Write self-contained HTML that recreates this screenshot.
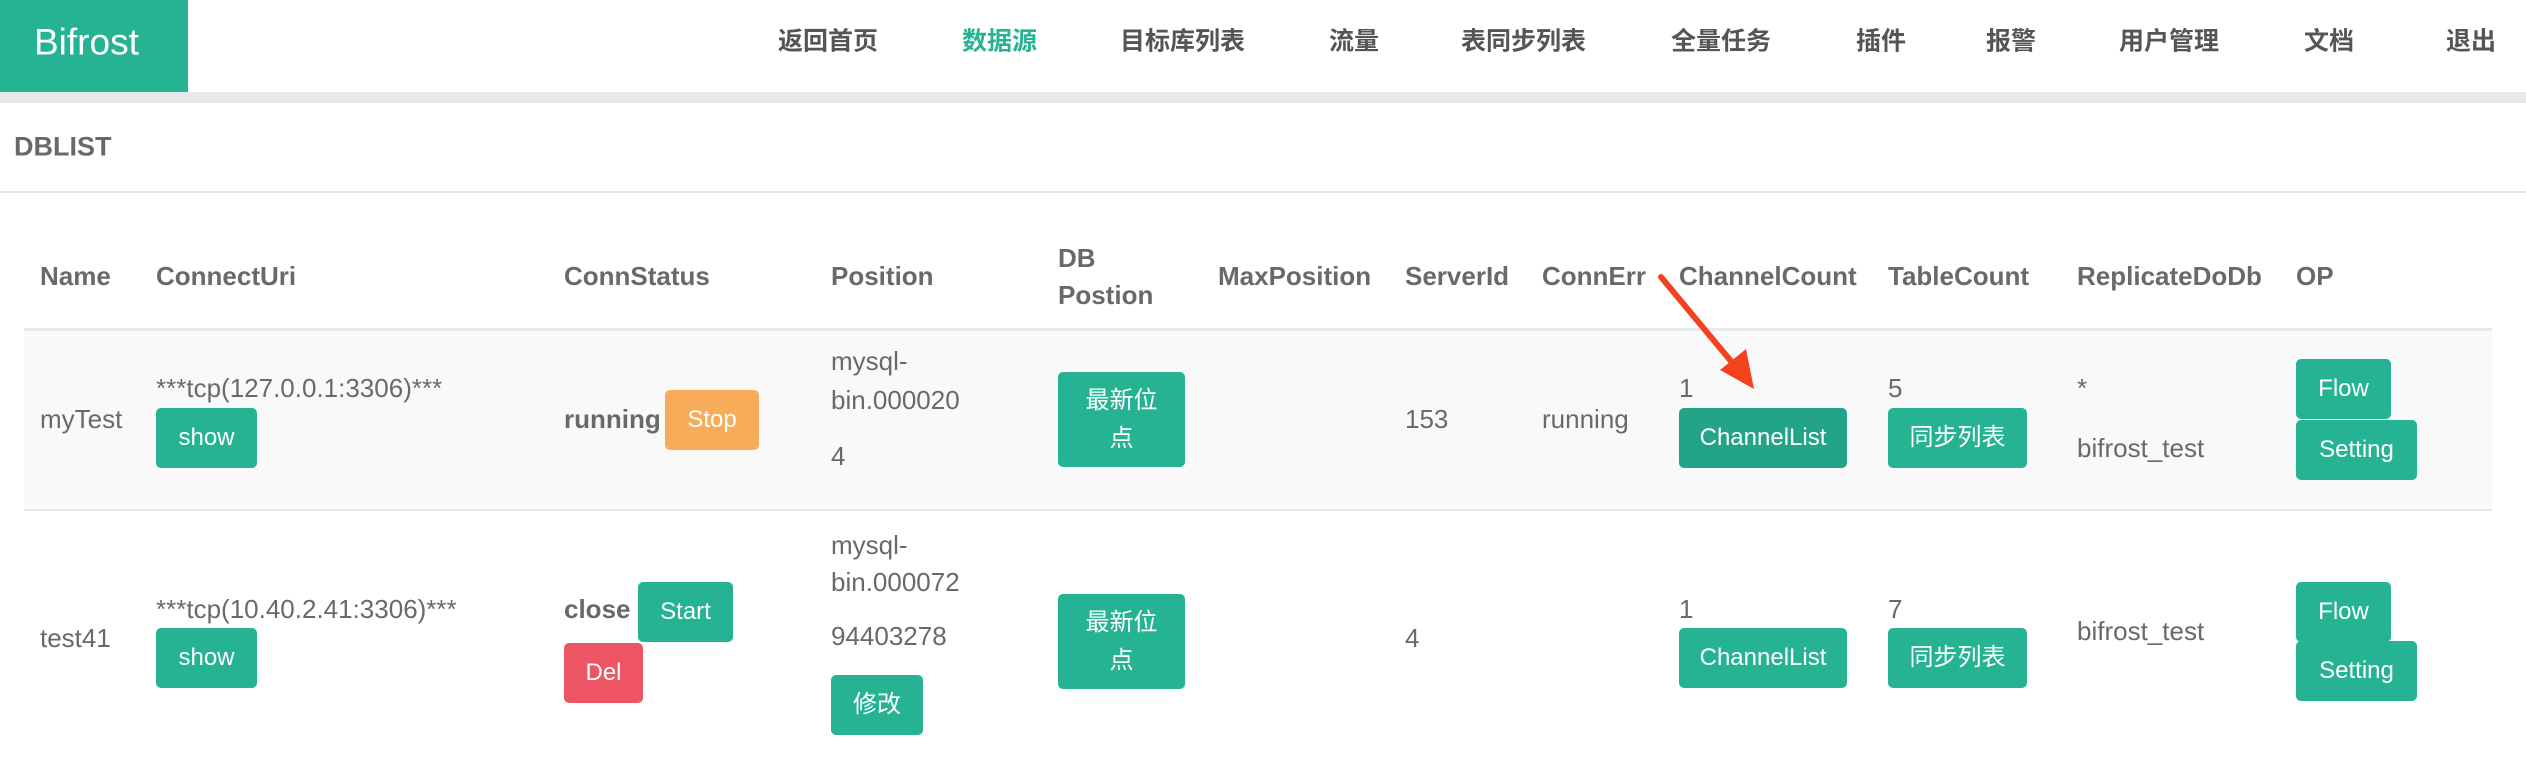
<!DOCTYPE html>
<html><head><meta charset="utf-8"><style>
*{margin:0;padding:0;box-sizing:border-box}
body{width:2526px;height:778px;background:#fff;position:relative;overflow:hidden;font-family:"Liberation Sans","Noto Sans CJK SC",sans-serif;color:#676a6c;font-size:26px}
.t{position:absolute;transform:translateY(-50%);white-space:nowrap;line-height:1}
.h{font-weight:bold;color:#676a6c}
.nav{position:absolute;top:42px;transform:translateY(-50%);font-size:25px;font-weight:bold;color:#555;white-space:nowrap;line-height:1}
.b{position:absolute;background:#26b393;color:#fff;border-radius:5px;display:flex;align-items:center;justify-content:center;text-align:center;font-size:24px;line-height:38px;height:60px}
</style></head><body>
<div style="position:absolute;left:0;top:0;width:188px;height:92px;background:#26b393"></div>
<div class="t" style="left:34px;top:42px;color:#fff;font-size:37px">Bifrost</div>
<div class="nav" style="left:778px">返回首页</div>
<div class="nav" style="left:962px;color:#26b393">数据源</div>
<div class="nav" style="left:1120px">目标库列表</div>
<div class="nav" style="left:1329px">流量</div>
<div class="nav" style="left:1461px">表同步列表</div>
<div class="nav" style="left:1671px">全量任务</div>
<div class="nav" style="left:1856px">插件</div>
<div class="nav" style="left:1986px">报警</div>
<div class="nav" style="left:2119px">用户管理</div>
<div class="nav" style="left:2304px">文档</div>
<div class="nav" style="left:2446px">退出</div>
<div style="position:absolute;left:0;top:92px;width:2526px;height:11px;background:#e7eaec"></div>
<div class="t h" style="left:14px;top:147px;font-size:27px">DBLIST</div>
<div style="position:absolute;left:0;top:191px;width:2526px;height:2px;background:#e7eaec"></div>

<div class="t h" style="left:40px;top:276px">Name</div>
<div class="t h" style="left:156px;top:276px">ConnectUri</div>
<div class="t h" style="left:564px;top:276px">ConnStatus</div>
<div class="t h" style="left:831px;top:276px">Position</div>
<div class="t h" style="left:1058px;top:258px">DB</div>
<div class="t h" style="left:1058px;top:295px">Postion</div>
<div class="t h" style="left:1218px;top:276px">MaxPosition</div>
<div class="t h" style="left:1405px;top:276px">ServerId</div>
<div class="t h" style="left:1542px;top:276px">ConnErr</div>
<div class="t h" style="left:1679px;top:276px">ChannelCount</div>
<div class="t h" style="left:1888px;top:276px">TableCount</div>
<div class="t h" style="left:2077px;top:276px">ReplicateDoDb</div>
<div class="t h" style="left:2296px;top:276px">OP</div>

<div style="position:absolute;left:24px;top:328px;width:2468px;height:183px;background:#f9f9f9;border-top:3px solid #e7eaec;border-bottom:2px solid #e7eaec"></div>

<div class="t" style="left:40px;top:419px">myTest</div>
<div class="t" style="left:156px;top:388px">***tcp(127.0.0.1:3306)***</div>
<div class="b" style="left:156px;top:408px;width:101px">show</div>
<div class="t h" style="left:564px;top:419px">running</div>
<div class="b" style="left:665px;top:390px;width:94px;background:#f8ac59">Stop</div>
<div class="t" style="left:831px;top:361px">mysql-</div>
<div class="t" style="left:831px;top:400px">bin.000020</div>
<div class="t" style="left:831px;top:456px">4</div>
<div class="b" style="left:1058px;top:372px;width:127px;height:95px">最新位<br>点</div>
<div class="t" style="left:1405px;top:419px">153</div>
<div class="t" style="left:1542px;top:419px">running</div>
<div class="t" style="left:1679px;top:388px">1</div>
<div class="b" style="left:1679px;top:408px;width:168px;background:#23a488">ChannelList</div>
<div class="t" style="left:1888px;top:388px">5</div>
<div class="b" style="left:1888px;top:408px;width:139px">同步列表</div>
<div class="t" style="left:2077px;top:388px">*</div>
<div class="t" style="left:2077px;top:448px">bifrost_test</div>
<div class="b" style="left:2296px;top:359px;width:95px">Flow</div>
<div class="b" style="left:2296px;top:420px;width:121px">Setting</div>

<div class="t" style="left:40px;top:638px">test41</div>
<div class="t" style="left:156px;top:609px">***tcp(10.40.2.41:3306)***</div>
<div class="b" style="left:156px;top:628px;width:101px">show</div>
<div class="t h" style="left:564px;top:609px">close</div>
<div class="b" style="left:638px;top:582px;width:95px">Start</div>
<div class="b" style="left:564px;top:643px;width:79px;background:#ed5565">Del</div>
<div class="t" style="left:831px;top:545px">mysql-</div>
<div class="t" style="left:831px;top:582px">bin.000072</div>
<div class="t" style="left:831px;top:636px">94403278</div>
<div class="b" style="left:831px;top:675px;width:92px">修改</div>
<div class="b" style="left:1058px;top:594px;width:127px;height:95px">最新位<br>点</div>
<div class="t" style="left:1405px;top:638px">4</div>
<div class="t" style="left:1679px;top:609px">1</div>
<div class="b" style="left:1679px;top:628px;width:168px">ChannelList</div>
<div class="t" style="left:1888px;top:609px">7</div>
<div class="b" style="left:1888px;top:628px;width:139px">同步列表</div>
<div class="t" style="left:2077px;top:631px">bifrost_test</div>
<div class="b" style="left:2296px;top:582px;width:95px">Flow</div>
<div class="b" style="left:2296px;top:641px;width:121px">Setting</div>

<svg style="position:absolute;left:0;top:0" width="2526" height="778">
<line x1="1661" y1="277" x2="1735" y2="366" stroke="#f4421f" stroke-width="6" stroke-linecap="round"/>
<polygon points="1754,389 1720,370 1746,349" fill="#f4421f"/>
</svg>
</body></html>
